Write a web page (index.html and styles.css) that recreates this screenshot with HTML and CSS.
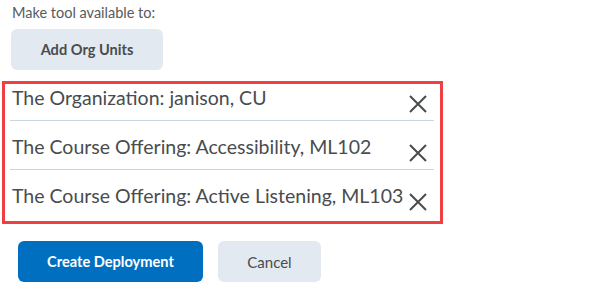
FILE: index.html
```html
<!DOCTYPE html>
<html>
<head>
<meta charset="utf-8">
<link rel="stylesheet" href="styles.css">
</head>
<body>
<p class="label">Make tool available to:</p>
<button class="btn btn-secondary btn-add">Add Org Units</button>
<div class="selected-box">
  <ul class="org-list">
    <li class="org-item">
      <span class="org-name">The Organization: janison, CU</span>
      <span class="remove" aria-label="Remove">
        <svg viewBox="0 0 18 18" width="18" height="18"><path d="M1 1 L17 17 M17 1 L1 17" stroke="#494c4e" stroke-width="2" fill="none"/></svg>
      </span>
    </li>
    <li class="org-item">
      <span class="org-name">The Course Offering: Accessibility, ML102</span>
      <span class="remove" aria-label="Remove">
        <svg viewBox="0 0 18 18" width="18" height="18"><path d="M1 1 L17 17 M17 1 L1 17" stroke="#494c4e" stroke-width="2" fill="none"/></svg>
      </span>
    </li>
    <li class="org-item">
      <span class="org-name">The Course Offering: Active Listening, ML103</span>
      <span class="remove" aria-label="Remove">
        <svg viewBox="0 0 18 18" width="18" height="18"><path d="M1 1 L17 17 M17 1 L1 17" stroke="#494c4e" stroke-width="2" fill="none"/></svg>
      </span>
    </li>
  </ul>
</div>
<div class="actions">
  <button class="btn btn-primary btn-create">Create Deployment</button>
  <button class="btn btn-secondary btn-cancel">Cancel</button>
</div>
</body>
</html>
```

FILE: styles.css
```css
html, body {
  margin: 0;
  padding: 0;
  background: #ffffff;
}
body {
  font-family: Lato, "Open Sans", sans-serif;
  color: #494c4e;
  width: 599px;
  height: 293px;
  overflow: hidden;
}
.label {
  margin: 0;
  padding: 4px 0 0 12px;
  font-size: 14.5px;
  line-height: 18px;
  color: #565a5c;
}
.btn {
  display: flex;
  align-items: center;
  justify-content: center;
  border: none;
  border-radius: 6px;
  height: 41px;
  padding: 0;
  font-family: Lato, "Open Sans", sans-serif;
  font-size: 14.6px;
  font-weight: 700;
}
.btn-secondary {
  background: #e3e9f1;
  color: #494c4e;
}
.btn-primary {
  background: #006fbf;
  color: #ffffff;
}
.btn-add {
  margin: 7px 0 0 11px;
  width: 152px;
}
.selected-box {
  margin: 11px 0 0 2px;
  width: 435px;
  border: 3px solid #ee3f43;
}
.org-list {
  list-style: none;
  margin: 0 6px 0 5px;
  padding: 0;
}
.org-item {
  display: flex;
  align-items: flex-start;
  justify-content: space-between;
  padding: 12px 0 7px 0;
  border-bottom: 1px solid #cdd5dc;
}
.org-item:first-child {
  padding-top: 0;
}
.org-item:last-child {
  border-bottom: none;
  padding-bottom: 10px;
}
.org-name {
  padding-left: 2px;
  font-size: 19.5px;
  line-height: 28px;
  color: #494c4e;
  white-space: nowrap;
}
.remove {
  display: flex;
  margin: 11px 7px 0 0;
}
.actions {
  display: flex;
  gap: 15px;
  margin: 17px 0 0 18px;
}
.btn-create {
  width: 185px;
}
.btn-cancel {
  width: 103px;
  font-weight: 400;
  font-size: 15px;
}
```
